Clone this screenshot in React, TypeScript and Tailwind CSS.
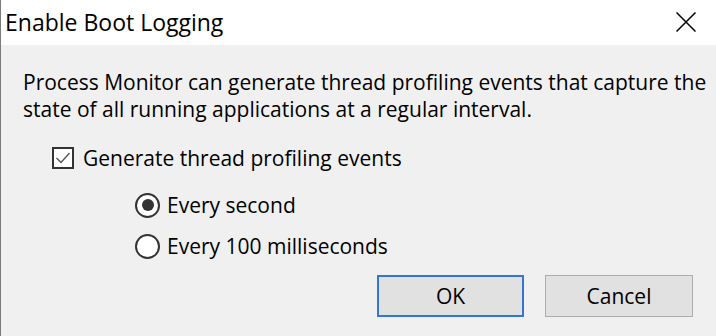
import React from 'react';

const Radio: React.FC<{ checked?: boolean; label: string }> = ({ checked, label }) => (
  <div className="flex items-center h-[26px]">
    <span className="w-[25px] h-[25px] rounded-full border-2 border-[#333] bg-white flex items-center justify-center">
      {checked && <span className="w-[12px] h-[12px] rounded-full bg-[#333]" />}
    </span>
    <span className="ml-[7px]">{label}</span>
  </div>
);

const App: React.FC = () => {
  return (
    <div className="w-[716px] h-[336px] bg-[#f0f0f0] border-l border-[#7a7a7a] flex flex-col text-black font-['Open_Sans',sans-serif] text-[21px] leading-[27px] overflow-hidden">
      <div className="h-[45px] bg-white flex items-center justify-between pl-[4px] pr-[20px] shrink-0">
        <span className="text-[23px]">Enable Boot Logging</span>
        <svg width="20" height="20" viewBox="0 0 20 20" className="mb-[1px]">
          <path d="M0.5 0.5 L19.5 19.5 M19.5 0.5 L0.5 19.5" stroke="#000" strokeWidth="1.5" fill="none" />
        </svg>
      </div>

      <div className="flex-1 pl-[22px] pt-[24px]">
        <p>
          Process Monitor can generate thread profiling events that capture the
          <br />
          state of all running applications at a regular interval.
        </p>

        <div className="flex items-center h-[24px] mt-[23px] ml-[29px]">
          <span className="w-[22px] h-[22px] border-2 border-[#333] bg-white flex items-center justify-center">
            <svg width="18" height="18" viewBox="0 0 18 18">
              <path d="M2.5 9 L7 13.5 L15.5 4" stroke="#555" strokeWidth="1.4" fill="none" />
            </svg>
          </span>
          <span className="ml-[9px]">Generate thread profiling events</span>
        </div>

        <div className="ml-[112px] mt-[22px] flex flex-col gap-[15px]">
          <Radio checked label="Every second" />
          <Radio label="Every 100 milliseconds" />
        </div>

        <div className="flex justify-end gap-[21px] pr-[23px] mt-[16px]">
          <button className="w-[147px] h-[42px] bg-[#e1e1e1] border-2 border-[#3178d6]">OK</button>
          <button className="w-[148px] h-[42px] bg-[#e1e1e1] border border-[#adadad]">Cancel</button>
        </div>
      </div>
    </div>
  );
};

export default App;
